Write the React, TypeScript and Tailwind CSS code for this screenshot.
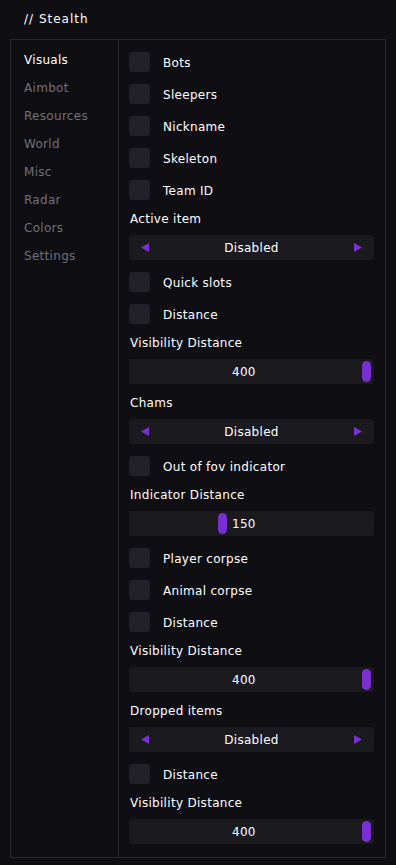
import { useState } from "react";

const tabs = ["Visuals", "Aimbot", "Resources", "World", "Misc", "Radar", "Colors", "Settings"];

type Item =
  | { kind: "check"; label: string }
  | { kind: "select"; label: string; value: string }
  | { kind: "slider"; label: string; value: number; max: number };

const items: Item[] = [
  { kind: "check", label: "Bots" },
  { kind: "check", label: "Sleepers" },
  { kind: "check", label: "Nickname" },
  { kind: "check", label: "Skeleton" },
  { kind: "check", label: "Team ID" },
  { kind: "select", label: "Active item", value: "Disabled" },
  { kind: "check", label: "Quick slots" },
  { kind: "check", label: "Distance" },
  { kind: "slider", label: "Visibility Distance", value: 400, max: 400 },
  { kind: "select", label: "Chams", value: "Disabled" },
  { kind: "check", label: "Out of fov indicator" },
  { kind: "slider", label: "Indicator Distance", value: 150, max: 400 },
  { kind: "check", label: "Player corpse" },
  { kind: "check", label: "Animal corpse" },
  { kind: "check", label: "Distance" },
  { kind: "slider", label: "Visibility Distance", value: 400, max: 400 },
  { kind: "select", label: "Dropped items", value: "Disabled" },
  { kind: "check", label: "Distance" },
  { kind: "slider", label: "Visibility Distance", value: 400, max: 400 },
];

function Check({ label }: { label: string }) {
  const [on, setOn] = useState(false);
  return (
    <button onClick={() => setOn(!on)} className="flex items-center h-[20px] text-left">
      <span
        className={
          "w-[21px] h-[20px] rounded-[4px] " + (on ? "bg-[#7a2fd2]" : "bg-[#222127]")
        }
      />
      <span className="ml-[13px] pt-[2px] text-white">{label}</span>
    </button>
  );
}

function Arrow({ dir }: { dir: "left" | "right" }) {
  return (
    <svg width="8" height="9" viewBox="0 0 8 9">
      {dir === "left" ? (
        <polygon points="8,0 8,9 0,4.5" fill="#7b2fd4" />
      ) : (
        <polygon points="0,0 0,9 8,4.5" fill="#7b2fd4" />
      )}
    </svg>
  );
}

function Select({ label, value }: { label: string; value: string }) {
  return (
    <div className="flex flex-col">
      <div className="leading-[14px] h-[14px] pl-[1px] text-white mb-[9px]">{label}</div>
      <div className="h-[25px] rounded-[4px] bg-[#1b1a1f] flex items-center justify-between px-[12px]">
        <Arrow dir="left" />
        <span className="text-white">{value}</span>
        <Arrow dir="right" />
      </div>
    </div>
  );
}

function Slider({ label, value, max }: { label: string; value: number; max: number }) {
  return (
    <div className="flex flex-col">
      <div className="leading-[14px] h-[14px] pl-[1px] text-white mb-[9px]">{label}</div>
      <div className="relative h-[25px] rounded-[4px] bg-[#1b1a1f] flex items-center pl-[103px]">
        <span className="text-white">{value}</span>
        <span
          className="absolute top-[2px] w-[9px] h-[21px] rounded-full bg-[#7a2fd2]"
          style={{ left: 2 + (value / max) * 231 }}
        />
      </div>
    </div>
  );
}

export default function App() {
  const [tab, setTab] = useState("Visuals");
  return (
    <div
      className="w-[396px] h-[865px] bg-[#0f0e13] text-[12px] tracking-[0.3px] relative"
      style={{ fontFamily: '"DejaVu Sans", sans-serif' }}
    >
      <div className="h-[39px] pl-[24px] pt-[11px] leading-[16px] text-white tracking-[1px]">// Stealth</div>
      <div className="mx-[10px] h-[819px] border border-[#29282e] flex">
        <div className="w-[108px] border-r border-[#29282e] flex flex-col pt-[12px] pl-[13px]">
          {tabs.map((t) => (
            <button
              key={t}
              onClick={() => setTab(t)}
              className={
                "h-[28px] leading-[16px] text-left pb-[12px] " +
                (tab === t ? "text-white" : "text-[#727177]")
              }
            >
              {t}
            </button>
          ))}
        </div>
        <div className="flex-1 flex flex-col gap-[12px] pt-[12px] pl-[10px] pr-[11px]">
          {items.map((it, i) =>
            it.kind === "check" ? (
              <Check key={i} label={it.label} />
            ) : it.kind === "select" ? (
              <Select key={i} label={it.label} value={it.value} />
            ) : (
              <Slider key={i} label={it.label} value={it.value} max={it.max} />
            )
          )}
        </div>
      </div>
    </div>
  );
}
